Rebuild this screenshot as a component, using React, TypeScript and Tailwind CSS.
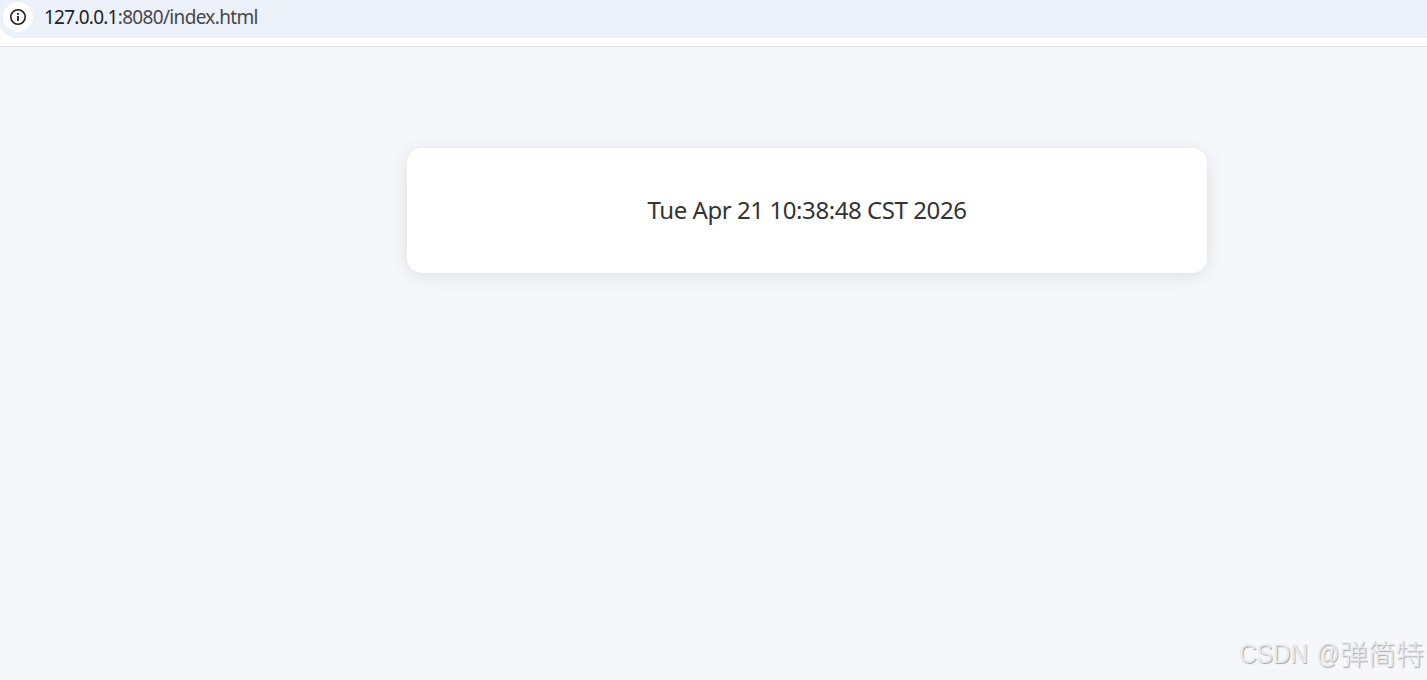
import React from 'react';

function SiteInfoIcon() {
  return (
    <svg className="h-4 w-4" viewBox="0 0 16 16" fill="none">
      <circle cx="8" cy="8" r="7.2" stroke="#1f1f1f" strokeWidth="1.6" />
      <rect x="7.1" y="7" width="1.8" height="5" fill="#1f1f1f" />
      <rect x="7.1" y="4" width="1.8" height="1.8" fill="#1f1f1f" />
    </svg>
  );
}

function AddressBar() {
  return (
    <header className="h-[47px] border-b border-[#dfe0e2] bg-white">
      <div className="-ml-0.5 flex h-[38px] items-start rounded-bl-[20px] bg-[#ebf0f9] pt-0.5 pl-[5px]">
        <div className="flex h-[30px] w-[30px] items-center justify-center rounded-full bg-white">
          <SiteInfoIcon />
        </div>
        <p className="ml-[11px] whitespace-nowrap font-['Noto_Sans',sans-serif] text-[19px] leading-[30px] tracking-[-0.67px] text-[#474747]">
          <span className="tracking-[-0.75px] text-[#1f1f1f]">127.0.0.1</span>:8080/index.html
        </p>
      </div>
    </header>
  );
}

export default function App() {
  return (
    <div className="relative flex h-[680px] w-[1427px] flex-col overflow-hidden bg-[#f5f7fb]">
      <AddressBar />
      <main className="flex-1 pt-[101px] pl-[407px]">
        <div className="flex h-[125px] w-[800px] items-center justify-center rounded-[15px] bg-white pb-0.5 shadow-[0_3px_18px_rgba(0,0,0,0.1)]">
          <p className="whitespace-nowrap font-['Noto_Sans',sans-serif] text-[24px] leading-[33px] tracking-[-0.43px] text-[#333333]">
            Tue Apr 21 10:38:48 CST 2026
          </p>
        </div>
      </main>
      <div className="absolute right-[3px] bottom-[6px] flex whitespace-nowrap font-['Liberation_Sans','Noto_Sans_CJK_SC',sans-serif] text-[28px] leading-[40px] font-light text-[#e9eaed] [text-shadow:1px_1px_1px_#a5a5a8]">
        <span className="origin-right scale-x-[0.87]">
          CSDN <span className="inline-block origin-right scale-x-[0.93]">@</span>
        </span>
        <span className="relative top-0.5">弹简特</span>
      </div>
    </div>
  );
}
